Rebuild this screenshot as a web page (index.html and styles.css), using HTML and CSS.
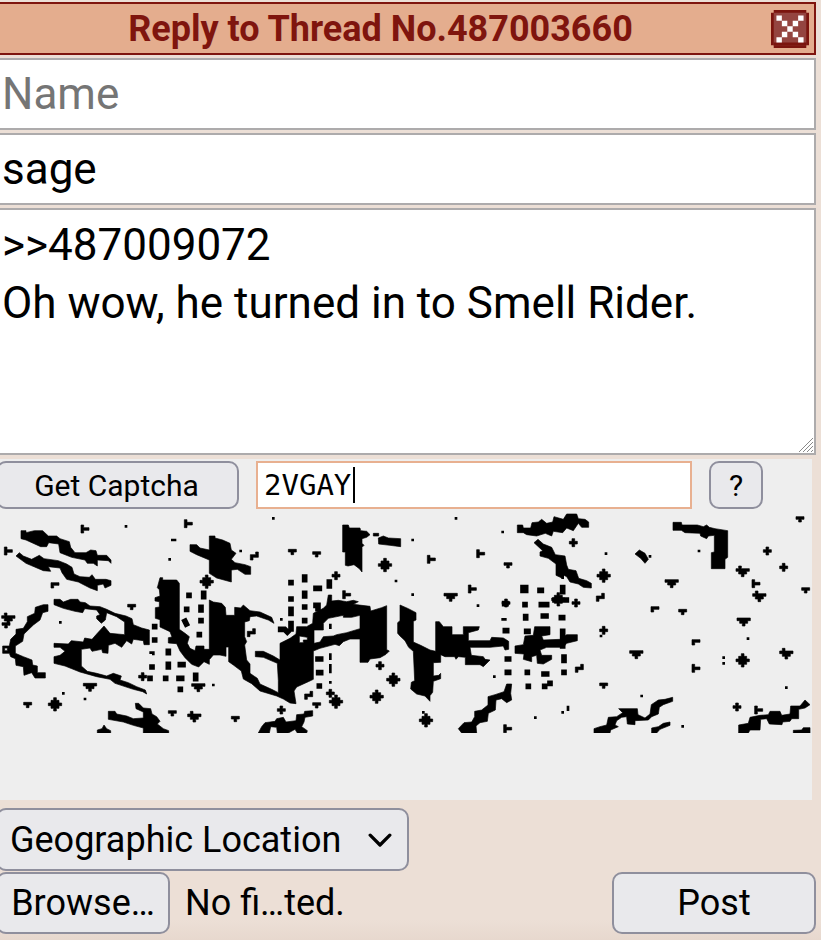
FILE: index.html
```html
<!DOCTYPE html>
<html lang="en">
<head>
  <meta charset="UTF-8" />
  <meta name="viewport" content="width=device-width, initial-scale=1.0" />
  <title>Reply to Thread No.487003660</title>
  <link rel="stylesheet" href="styles.css">
</head>
<body>
  <form class="quick-reply">
    <header class="qr-header">
      <h1>Reply to Thread No.487003660</h1>
      <button type="button" class="close" aria-label="Close">
        <svg viewBox="0 0 14 14">
          <path fill="#7b150e" d="M1 0h12v1h1v12h-1v1H1v-1H0V1h1z" />
          <path fill="#944540" d="M1 1h12v12H1z" />
          <path fill="#7b150e" d="M1 12h12v1H1z" />
          <path fill="#fff" d="M2 2h2v2h2v2h2V4h2V2h2v2h-2v2H8v2h2v2h2v2h-2v-2H8V8H6v2H4v2H2v-2h2V8h2V6H4V4H2z" />
        </svg>
      </button>
    </header>

    <input class="field" type="text" placeholder="Name" aria-label="Name">
    <input class="field" type="text" value="sage" aria-label="Options">
    <div class="comment">
      <textarea class="field" aria-label="Comment">&gt;&gt;487009072
Oh wow, he turned in to Smell Rider.</textarea>
      <svg class="grip" viewBox="0 0 14 14"><path d="M0 14L14 0M4 14L14 4M8 14l6-6M12 14l2-2" /></svg>
    </div>

    <section class="captcha">
      <div class="captcha-bar">
        <button type="button" class="btn get">Get Captcha</button>
        <div class="answer">
          <input type="text" value="2VGAY" aria-label="Captcha answer">
          <span class="caret"></span>
        </div>
        <button type="button" class="btn help">?</button>
      </div>
      <svg class="challenge" viewBox="0 0 2436 669" role="img" aria-label="Captcha">
        <defs>
          <path id="dia" d="M-4-20h8v8h8v8h8v8h-8v8h-8v8h-8v-8h-8v-8h-8v-8h8v-8h8z" />
          <path id="plus" d="M-4-12h8v8h8v8h-8v8h-8v-8h-8v-8h8z" />
          <path id="tri" d="M-20-12h40v8h-8v8h-8v8h-8v-8h-8v-8h-8z" />
          <path id="tip" d="M-12-8h24v8h-8v8h-8v-8h-8z" />
          <path id="tee" d="M-12-12h8v8h16v8h-16v8h-8z" />
          <path id="cor" d="M-12-8h24v8h-16v8h-8z" />
          <path id="not" d="M4-12h8v16h-16v8h-8v-16h16z" />
          <path id="arr" d="M-12-16h8v8h24v8h-8v8h-8v8h-8v-8h-8v-8h-8v-8h8z" />
        </defs>

        <!-- left strokes -->
        <path d="M63 62h15v6l25-6h25l17 16h25l10 8 28 9 4 17 13 16h33l14-8 16 2 4 14h28l13 14v10l-8-8-33-2v18l-12-8h-18l-7-10-40-8-35-14-4-26-30-4-6 12h-18L78 90l-15-4z" />
        <path d="M48 138l10-10 12 10 25 10 23-12 14 10 43 6 25 10 16 10 6 20 18 8 28 2 8-8 10 14h32l15 4v14l-18 8-5-12-18 4v16l-22-8-35-18-35-8-14-20-6-14-35-4 7 14-22-2-52-22z" />
        <path fill-rule="evenodd" d="M130 284h14v20l-16 4-8 22-20 15-28 27-4 22-22 14v22l24 10 26 10 2 15 14 3v20h24v16h-31l-10-16-23 8-2-26-22-4-2-20-14-6-4-10H8v-22h20l4-20 16-16v-14l22-3 12-20v-15l22-10 2-18zM14 414v8h8v-8z" />
        <path d="M162 268h18l10 8 22-8h22l6 8 16 2 14 10 30 2 20 8 25 12 33 8 18 8 4 18 25 10 23 6v44h-16l-2-12-30-4-5 14-15-10-15 20-20-12-20 6-1 24-16-2-3-10-29 6-6-10-26 4v50l18 16 28 6 30 8 20-8 24 8-4 12 25 8 25 12 26 10 4 12-12-7-28-7-55-18-15-12-40-8-50-14-45-18-33-8v-20l18-4 15-12-15-12h-18v-12l43 2 9-10 36 4 4-12 22 4 14-16 22-24 18 22 44 4v-38l-24-16-30-12-4 22-12 10-14-14v-8l10-4-10-14-36-4-6 12-23-4-35-9-28-11z" />
        <path d="M325 604h20l5 8 30 6 20 8 30-2v-18l-22-10-2-16h10l14 14 22 2 4 16 14 8 10 14-8 8 18 14 16 6v7h-76v-15l-30-8-30-10-45-8zM292 669v-9l14-4 6-11 8 11 12 6v7z" />

        <!-- middle strokes -->
        <path d="M570 104h20l10 10 28 6V78h17v6l23 6 22 10 4 20 14 10-14 18 11 10 30 6 17 6v23h-17l-23-15-18 2v36l-22-6-22-6-22-14v-40l-38-16-20-10z" />
        <path fill-rule="evenodd" d="M480 203h8v7h42l8 10v138l17 12 13 10-6 20 8 15 15 7 3-14h24v10h16V270l12 6 25 4 11 12 2 24h26v-24l18 2 8-9 8 7 12 10 30 4 35 16 7 18-17-10-35-12-20 2-2 12-14 4v44l6 15-6 10 6 45 10 12v28l22 15 8 17 35 16 20 10v-36l-3-52-42-18-24-2v-16h24l30 14 20 12v-50l30-15 18-13 2-22h30l18-10 2-30 30-15 10-10 5-30h10v18l20-2 25 4 20-4 15 4-15 8 50 6 2 14 33-10 15-6v132l8 4-10 10-18 10-30 4-6 10h-24v-70h-30l-20 8-12 12-13-4-45 12-20 8v85l-15 7-35 16-8 12 6 38-18-2-20-12-20-9-50-15-25-22-25-14-6-24-24-18-14-10v-44h-8v28l-18-4h-20l-12 14v14l-16-8-16 16-21-8-20-20-15-20-10-22-25-2v-16l11-2-6-16-30-14v-22l-14-4v-32l12-2v-16l-13-2v-10l15-5-2-19-6-6zM970 340l15-15 45-9v6h25l25-6v40l-40 12-30 6-10 4-30 2-10 16-18 4v-40h28zM898 378v20h12v-8h12v-8z" />
        <path d="M1028 45h17l3 9h32l2 8 18 2 10 10-10 8-14 4v14l6 6-6 6v74l-8-10-16-12-18 4-8-2v-40h-8zM1120 70h16v8h-16zM1135 84l15-6 15 6 37 2v24l-32-4-34-4z" />
        <path d="M775 669l10-19 10-12 30-4 5-8 20-4 8 14 30-4 2-18 22-2 2-8 24-2v16l-23 4-3 14-7 14 17 12-2 7h-28l-7-11-20 11h-33l-2-17-18-2-4 19z" />
        <path d="M1200 285l25 11 23 12v22l-8 4v62l22 10 28 14 17 4v-89h11l12 15h26v24h34v-24h48l-3 10-30 8v24h65l5-10 35 2 16 10v24l-11 2-5-12-40 4h-60l4 24 36 4 5 8 15 2-20 20-10-6h-44v-22l-21-2-7 8-4-8h-29l-13-6v23l-22 1v40l16-2 6-6v16l-22 8-2 33-8 10v17l-15-16-25-6-18-15 2-20 10-5-4-88-14-12-11-20-15-14-7-8v-32l7-6z" />

        <!-- right strokes -->
        <path d="M1552 45h16l2 9h22l4-16 19-2 10-8 15 12 18-4 4-16 28 8 10-16h30l5 14 20 2 11 8v16h-21l-10-12-15 22-20-8-12 14-28-4-5 14-19-8-26 8-30-4-10-6h-18z" />
        <path d="M1602 98l12-10 16 14 25 10 11 22 29 4 5 27 5 13 23 4 8 23 24 7 14 8v14l-24-2-15-10-25-6-10-16-10-5v11l-22-10v-34l-23-17-25-7v-12l8-4z" />
        <path d="M1545 408l25-4 5-26 25-2 4-26h46v24l-25 4 5 12 50-2 20-14h32v18l-32 8-10 12h-50l-20 8 5 16h30v12l-25 14-18-2-2-24-15 4v15l-25-7 2-16-27-2z" />
        <path d="M1375 656l17-18 23-2 9-16v-16l21-4 19-15v-25l21-6 27-9 8-23h15l-3 28 3 20-15 8-15-12-17 4-2 30-21 10-3 24-22 4-12 10 2 21h-45z" />
        <path d="M1782 669v-13l18-6 20-5 5-23 25-2 18-12-12-12h56l2 18 21 10 15-12 4-28 21-14 20-2 23-6v12l-28 10-12 8-3 20-20 8-10 10-40 2v12l-23-2-2-22-15 2-15 10-5 13 10 5-23 10-2 9zM1955 669v-15l20-4 15-10 20-4v10l-30 12-10 11z" />
        <path d="M2216 669v-24l29-5 5-18 30-6 25-2 5-10h30l5 12 25-4 2-24h28l15-18 15 14-15 10-19 4v28h-21l-5 8-22 2-2 8-38-2-8-16-18 2-2 32h-30l-5 9zM2380 669v-8l25-1 5-7h20v16z" />
        <path d="M2019 37h25l2 8h46l18 5 10-5 8 7 17 4 38 6v80l-8 6v28h-41v-48l9-2V76l-18 2-5 8-18-8-2-8-45-2-11-7h-25zM1905 132l13-12 17 10 10 18-10 12-13-15z" />

        <!-- dotted blocks -->
        <path class="blocks" d="M567 256h0M560 298h0M555 334l4 8M464 350h0M464 390h0M505 424v4M456 471h0M505 463v8M541 464h8M497 505h0M537 505h8M541 538h0M587 496v10M450 505h0M611 250v10M603 292v8M603 332h0M598 374h0M873 218h0M914 201v8M914 250v8M873 267h0M873 298v12M914 291h0M914 332h0M873 341v16M988 216v12M948 235h10M948 286h6v10M842 358h12l8 8M954 447h8M956 488h6M958 528h0M1569 233h8v8h-8zM1620 241h4M1688 233v12M1514 281h4M1575 284h0M1624 284h16M1577 320v4M1630 318h8M1684 323h4M1516 362h4M1580 364h4M1688 364v44M1522 447h4M1522 487h4M1582 487h0M1632 492h8M1692 487h0M1692 441v10M1585 529h0M1634 529h0M1650 520h0M1665 270h34" />
        <path class="specks" d="M378 49h0M509 148h0M181 337h0M190 550h0M255 567h0M517 90h8M452 428h8v4M820 25h0M722 123h0M844 328h0M1188 213h0M640 525h0M991 517h0M991 345v8M991 434v12M991 466v20M1368 25h0M1508 66h0M1238 90h0M1238 254h0M1434 287h0M1483 500h0M1270 607h0M1606 623h0M1688 607h0M1818 131h0M1704 591v8M1508 328h8M2097 123h0M2244 386h0M2171 443h0M2171 460h0M2359 533h0M1925 558h0M2048 649h0M1950 139h0M1803 378h0M1688 195v8" />

        <!-- noise -->
        <use href="#tee" x="25" y="123" /><use href="#tee" x="255" y="57" /><use href="#tee" x="565" y="41" />
        <use href="#tee" x="1040" y="254" /><use href="#tee" x="1442" y="131" /><use href="#tee" x="1417" y="237" />
        <use href="#tee" x="1294" y="148" /><use href="#tee" x="1523" y="656" /><use href="#tee" x="2268" y="221" />
        <use href="#tee" x="2088" y="475" /><use href="#tee" x="2276" y="600" />
        <use href="#cor" x="165" y="226" /><use href="#cor" x="1965" y="298" /><use href="#cor" x="2088" y="397" />
        <use href="#tri" x="270" y="532" /><use href="#tri" x="595" y="533" /><use href="#tri" x="1352" y="262" />
        <use href="#tri" x="2015" y="221" /><use href="#tri" x="2231" y="336" /><use href="#tri" x="1909" y="434" />
        <use href="#arr" x="25" y="325" /><use href="#arr" x="583" y="620" /><use href="#arr" x="2228" y="184" />
        <use href="#arr" x="2278" y="259" /><use href="#arr" x="2359" y="431" />
        <use href="#tip" x="18" y="346" /><use href="#tip" x="83" y="585" /><use href="#tip" x="395" y="291" />
        <use href="#tip" x="517" y="610" /><use href="#tip" x="877" y="126" /><use href="#tip" x="950" y="133" />
        <use href="#tip" x="706" y="627" /><use href="#tip" x="950" y="586" /><use href="#tip" x="1524" y="166" />
        <use href="#tip" x="1811" y="527" /><use href="#tip" x="2400" y="28" /><use href="#tip" x="2417" y="241" />
        <use href="#tip" x="2048" y="306" />
        <use href="#plus" x="428" y="500" /><use href="#plus" x="1008" y="197" /><use href="#plus" x="844" y="600" />
        <use href="#plus" x="1140" y="467" /><use href="#plus" x="991" y="550" /><use href="#plus" x="1720" y="98" />
        <use href="#plus" x="1728" y="279" /><use href="#plus" x="1811" y="361" /><use href="#plus" x="2302" y="123" />
        <use href="#plus" x="2351" y="172" /><use href="#plus" x="2211" y="591" /><use href="#plus" x="1518" y="279" />
        <use href="#dia" x="165" y="583" /><use href="#dia" x="620" y="215" /><use href="#dia" x="1155" y="165" />
        <use href="#dia" x="1180" y="509" /><use href="#dia" x="1130" y="560" /><use href="#dia" x="1008" y="575" />
        <use href="#dia" x="1811" y="197" /><use href="#dia" x="1278" y="631" /><use href="#dia" x="2228" y="451" />
        <use href="#dia" x="1675" y="268" />
        <use href="#not" x="763" y="138" /><use href="#not" x="754" y="368" /><use href="#not" x="926" y="556" />
        <use href="#not" x="1801" y="262" /><use href="#not" x="1738" y="475" />
      </svg>
    </section>

    <div class="flag">
      <select class="btn" aria-label="Flag">
        <option>Geographic Location</option>
      </select>
      <svg class="chevron" viewBox="0 0 22 14"><path d="M2 2l9 9 9-9" /></svg>
    </div>

    <div class="submit-row">
      <input type="file" id="upload" class="file-input">
      <label for="upload" class="btn browse">Browse…</label>
      <span class="file-name">No fi…ted.</span>
      <button type="submit" class="btn post">Post</button>
    </div>
  </form>
</body>
</html>
```

FILE: styles.css
```css
:root {
  --bg: #ecdfd6;
  --bar: #e4ad8e;
  --maroon: #7f150e;
  --border: #adabac;
  --btn-bg: #e9e9ec;
  --btn-border: #8f8f9d;
}

* {
  box-sizing: border-box;
}

body {
  margin: 0;
  min-height: 100vh;
  background: linear-gradient(to top, #e7d8ce, var(--bg) 20px);
  font-family: Roboto, "Liberation Sans", sans-serif;
  color: #000;
  overflow-x: hidden;
}

input, textarea, select, button {
  font: inherit;
  color: inherit;
}

.quick-reply {
  display: flex;
  flex-direction: column;
  gap: 3px;
  margin: 0 5px 0 -4px;
  padding-top: 2px;
}

.qr-header {
  display: flex;
  align-items: center;
  height: 53px;
  padding-right: 5px;
  border: 2px solid var(--maroon);
  background: var(--bar);
  color: var(--maroon);
}

.qr-header h1 {
  flex: 1;
  margin: 0;
  padding-right: 8px;
  font-size: 36px;
  line-height: 48px;
  font-weight: bold;
  text-align: center;
}

.close {
  width: 38px;
  height: 38px;
  padding: 0;
  border: none;
  background: none;
  cursor: pointer;
}

.close svg {
  display: block;
}

.field {
  display: block;
  width: 100%;
  height: 72px;
  padding: 0 4px;
  border: 2px solid var(--border);
  border-radius: 0;
  background: #fff;
  font-size: 44px;
  outline: none;
}

.field::placeholder {
  color: #757575;
  opacity: 1;
}

.comment {
  position: relative;
}

textarea.field {
  height: 247px;
  padding-top: 6px;
  line-height: 58px;
  resize: none;
}

.grip {
  position: absolute;
  right: 3px;
  bottom: 3px;
  width: 14px;
  height: 14px;
  stroke: #8a8a8a;
  stroke-width: 1;
  fill: none;
}

.captcha {
  height: 341px;
  margin-top: 1px;
  margin-right: 4px;
  padding-top: 2px;
  padding-left: 4px;
  background: #eee;
}

.captcha-bar {
  display: flex;
  gap: 17px;
  margin-left: -4px;
  padding-right: 49px;
  font-size: 30px;
}

.btn {
  border: 2px solid var(--btn-border);
  border-radius: 10px;
  background: var(--btn-bg);
  text-align: center;
  cursor: pointer;
}

.get {
  width: 243px;
  height: 48px;
  padding: 0 2px 0 0;
}

.answer {
  position: relative;
  flex: 1;
}

.answer input {
  width: 100%;
  height: 48px;
  padding: 0 6px;
  border: 2px solid #e8b090;
  background: #fff;
  font-family: "DejaVu Sans Mono", monospace;
  font-size: 29px;
  outline: none;
}

.caret {
  position: absolute;
  top: 6px;
  left: 97px;
  width: 2px;
  height: 36px;
  background: #000;
}

.help {
  width: 54px;
  height: 48px;
  padding: 0;
}

.challenge {
  display: block;
  width: 100%;
  margin-top: 1px;
  stroke: #000;
  stroke-width: 2;
}

.blocks, .specks {
  fill: none;
  stroke-width: 17;
  stroke-linecap: square;
}

.specks {
  stroke-width: 8;
}

.flag {
  position: relative;
  align-self: flex-start;
  margin-top: 5px;
}

.flag select {
  display: block;
  width: 413px;
  height: 63px;
  padding: 0 12px;
  appearance: none;
  font-size: 36px;
  text-align: left;
}

.chevron {
  position: absolute;
  top: 25px;
  right: 17px;
  width: 24px;
  fill: none;
  stroke: #000;
  stroke-width: 3;
  stroke-linecap: round;
  stroke-linejoin: round;
  pointer-events: none;
}

.submit-row {
  display: flex;
  align-items: center;
  margin-top: -2px;
  font-size: 36px;
}

.file-input {
  position: absolute;
  width: 1px;
  height: 1px;
  opacity: 0;
}

.browse {
  width: 174px;
  height: 62px;
  line-height: 58px;
}

.file-name {
  flex: 1;
  margin-left: 15px;
}

.post {
  width: 204px;
  height: 62px;
}
```
